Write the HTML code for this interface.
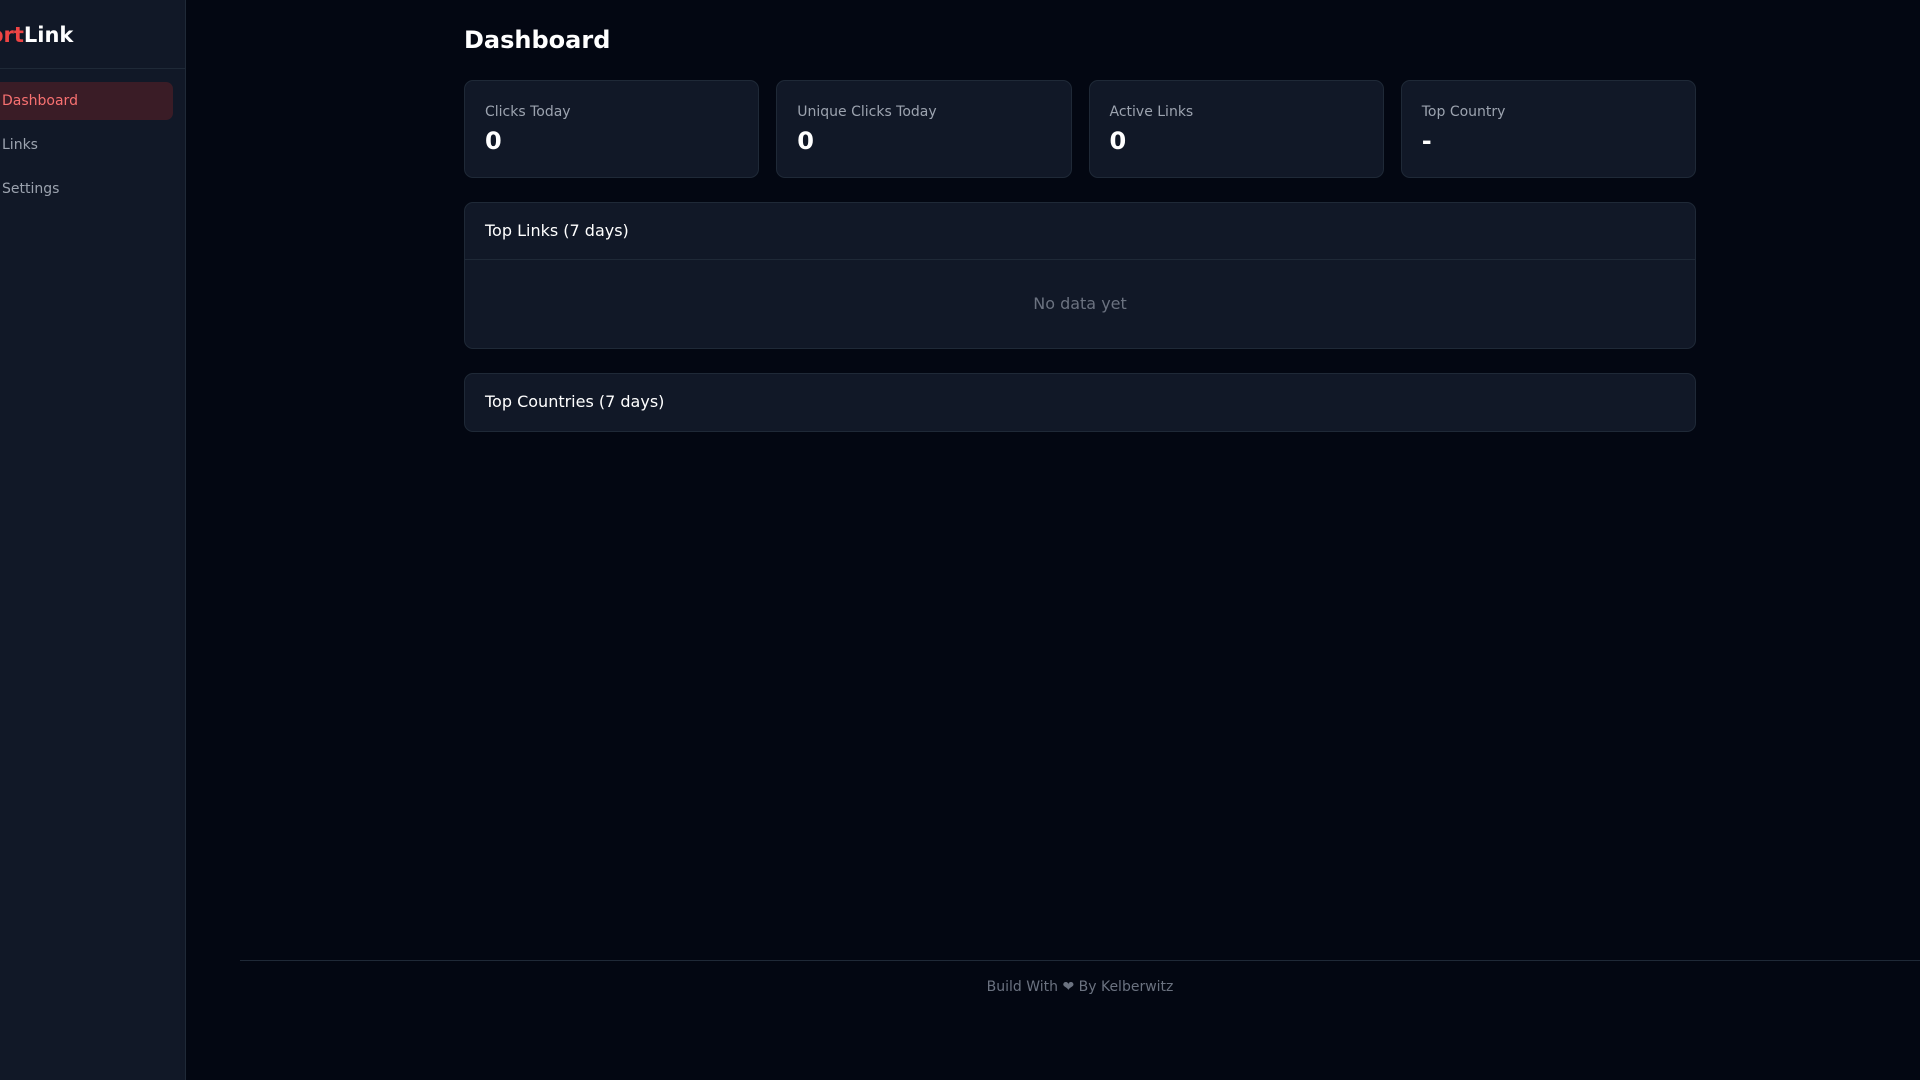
<!DOCTYPE html>
<html><head><meta charset="utf-8"><style>
*{box-sizing:border-box;margin:0;padding:0}
body{width:1920px;height:1080px;background:#030712;font-family:"DejaVu Sans","Liberation Sans",sans-serif;color:#f3f4f6;position:relative;overflow:hidden}
.side{position:absolute;left:0;top:0;width:186px;height:1080px;background:#111827;border-right:1px solid #1f2937;overflow:hidden}
.logo{position:absolute;left:-41px;top:21px;font-size:21px;font-weight:bold;color:#fff;line-height:28px}
.logo span{color:#ef4444}
.sep{position:absolute;left:0;top:68px;width:185px;height:1px;background:#1f2937}
.nav{position:absolute;left:-20px;width:193px;height:38px;border-radius:7px;font-size:14px;color:#9ca3af;line-height:38px;padding-left:22px}
.nav.act{background:#3a1c26;color:#f87171}
.title{position:absolute;left:464px;top:23px;font-size:24px;font-weight:bold;color:#fff;line-height:34px}
.cards{position:absolute;left:464px;top:80px;width:1232px;display:grid;grid-template-columns:repeat(4,1fr);gap:17px}
.card{height:98px;background:#111827;border:1px solid #1f2937;border-radius:9px;padding:21px 20px}
.card .l{font-size:14px;color:#9ca3af;line-height:20px}
.card .v{font-size:24px;font-weight:bold;color:#fff;line-height:32px;margin-top:3px}
.panel{position:absolute;left:464px;width:1232px;background:#111827;border:1px solid #1f2937;border-radius:9px}
.ph{height:57px;line-height:56px;padding-left:20px;font-size:16px;color:#fff;border-bottom:1px solid #1f2937}
.empty{height:88px;line-height:88px;text-align:center;color:#6b7280;font-size:16px}
.fl{position:absolute;left:240px;top:960px;width:1680px;height:1px;background:#1f2937}
.ft{position:absolute;left:240px;width:1680px;top:977px;text-align:center;font-size:14px;color:#6b7280;line-height:20px}
</style></head><body>
<div class="side">
<div class="logo"><span>Short</span>Link</div>
<div class="sep"></div>
<div class="nav act" style="top:82px">Dashboard</div>
<div class="nav" style="top:126px">Links</div>
<div class="nav" style="top:170px">Settings</div>
</div>
<div class="title">Dashboard</div>
<div class="cards">
<div class="card"><div class="l">Clicks Today</div><div class="v">0</div></div>
<div class="card"><div class="l">Unique Clicks Today</div><div class="v">0</div></div>
<div class="card"><div class="l">Active Links</div><div class="v">0</div></div>
<div class="card"><div class="l">Top Country</div><div class="v">-</div></div>
</div>
<div class="panel" style="top:202px;height:147px"><div class="ph">Top Links (7 days)</div><div class="empty">No data yet</div></div>
<div class="panel" style="top:373px;height:59px"><div class="ph" style="border-bottom:none">Top Countries (7 days)</div></div>
<div class="fl"></div>
<div class="ft">Build With ❤ By Kelberwitz</div>
</body></html>
